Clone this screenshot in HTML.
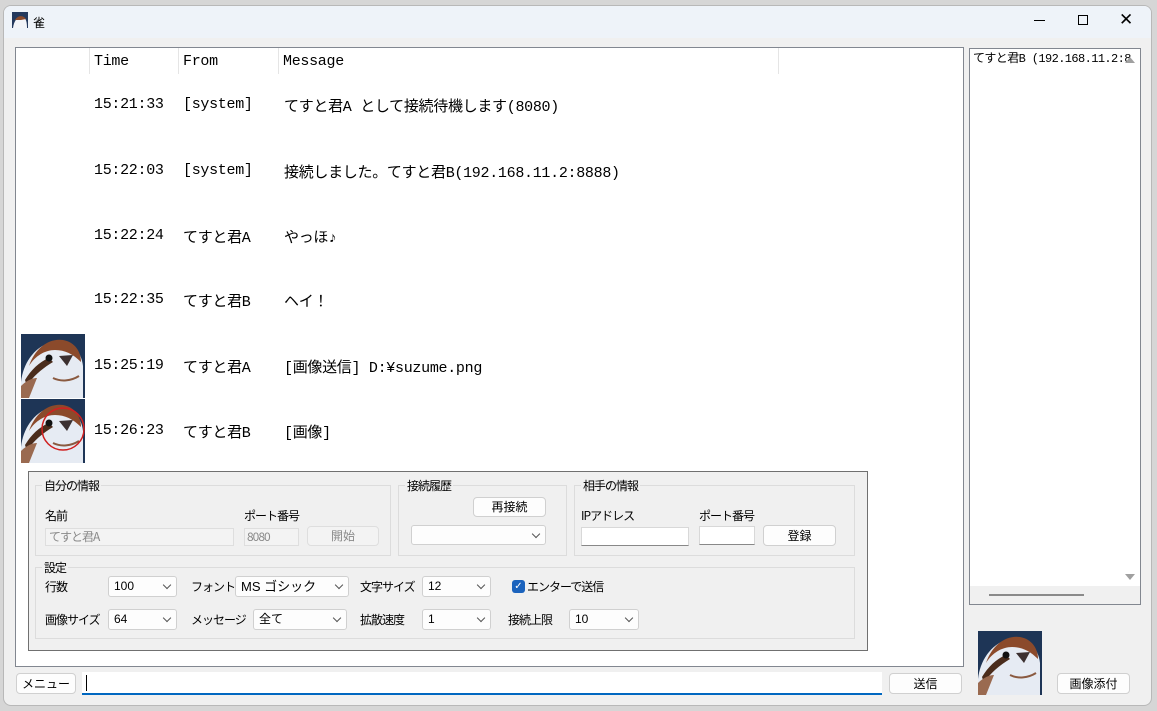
<!DOCTYPE html>
<html><head><meta charset="utf-8">
<style>
*{box-sizing:border-box;margin:0;padding:0}
body{width:1157px;height:711px;background:#d6d6d6;position:relative;overflow:hidden;font-family:"Liberation Mono","Noto Sans CJK JP",monospace;color:#000}
.win{position:absolute;left:3px;top:5px;width:1149px;height:701px;background:#f0f0f0;border:1px solid #b8b8b8;border-radius:8px;overflow:hidden}
.title{position:absolute;left:0;top:0;width:100%;height:32px;background:#eef3f9}
.a{position:absolute;white-space:nowrap}
.panel{position:absolute;background:#fff;border:1px solid #828790}
.m{font-size:15px;letter-spacing:-0.3px}
.s{font-size:12px;letter-spacing:-1px;font-family:"Noto Sans CJK JP","Liberation Sans",sans-serif}
.gb{position:absolute;border:1px solid #dcdcdc}
.gl{position:absolute;top:-9px;left:6px;background:#f0f0f0;padding:0 2px;font-size:12px;letter-spacing:-1px;font-family:"Noto Sans CJK JP",sans-serif}
.btn{position:absolute;background:#fdfdfd;border:1px solid #d0d0d0;border-radius:4px;font-size:12px;text-align:center;font-family:"Noto Sans CJK JP",sans-serif}
.cb{position:absolute;background:#fdfdfd;border:1px solid #d0d0d0;border-radius:3px;font-size:12px;padding-left:5px;height:21px;line-height:19px;font-family:"Liberation Sans","Noto Sans CJK JP",sans-serif}
.cb:after{content:"";position:absolute;right:6px;top:5px;width:5px;height:5px;border-right:1px solid #555;border-bottom:1px solid #555;transform:rotate(45deg)}
.tb{position:absolute;background:#fff;border:1px solid #d8d8d8;border-bottom:1px solid #888;height:18px}
.dis{background:#f3f3f3;color:#8a8a8a;border-color:#dedede}
</style></head><body>
<div class="win">
<div class="title"></div>
<svg class="a" style="left:8px;top:6px" width="16" height="16" viewBox="0 0 16 16"><rect width="16" height="16" fill="#23395d"/><path d="M1 16 C2 8 6 4 11 5 C14 6 15 10 15 16Z" fill="#f2f4f8"/><path d="M3 8 C6 3 11 3 14 7 L9 8Z" fill="#8a4a2a"/></svg>
<div class="a s" style="left:29px;top:8px;font-size:12px">雀</div>
<div class="a" style="left:1030px;top:14px;width:11px;height:1px;background:#000"></div>
<div class="a" style="left:1074px;top:9px;width:10px;height:10px;border:1px solid #000"></div>
<div class="a" style="left:1115px;top:4px;font-size:17px;font-family:'DejaVu Sans'">✕</div>

<div class="panel" style="left:11px;top:41px;width:949px;height:620px">
 <div class="a" style="left:73px;top:0;width:1px;height:26px;background:#e5e5e5"></div>
 <div class="a" style="left:162px;top:0;width:1px;height:26px;background:#e5e5e5"></div>
 <div class="a" style="left:262px;top:0;width:1px;height:26px;background:#e5e5e5"></div>
 <div class="a" style="left:762px;top:0;width:1px;height:26px;background:#e5e5e5"></div>
 <div class="a m" style="left:78px;top:5px">Time</div>
 <div class="a m" style="left:167px;top:5px">From</div>
 <div class="a m" style="left:267px;top:5px">Message</div>

 <div class="a m" style="left:78px;top:48px">15:21:33</div><div class="a m" style="left:167px;top:48px">[system]</div><div class="a m" style="left:268px;top:47px">てすと君A として接続待機します(8080)</div>
 <div class="a m" style="left:78px;top:114px">15:22:03</div><div class="a m" style="left:167px;top:114px">[system]</div><div class="a m" style="left:268px;top:113px">接続しました。てすと君B(192.168.11.2:8888)</div>
 <div class="a m" style="left:78px;top:179px">15:22:24</div><div class="a m" style="left:167px;top:178px">てすと君A</div><div class="a m" style="left:268px;top:178px">やっほ♪</div>
 <div class="a m" style="left:78px;top:243px">15:22:35</div><div class="a m" style="left:167px;top:242px">てすと君B</div><div class="a m" style="left:268px;top:242px">ヘイ！</div>
 <div class="a m" style="left:78px;top:309px">15:25:19</div><div class="a m" style="left:167px;top:308px">てすと君A</div><div class="a m" style="left:268px;top:308px">[画像送信] D:¥suzume.png</div>
 <div class="a m" style="left:78px;top:374px">15:26:23</div><div class="a m" style="left:167px;top:373px">てすと君B</div><div class="a m" style="left:268px;top:373px">[画像]</div>

 <svg class="a" style="left:5px;top:286px" width="64" height="64" viewBox="0 0 64 64"><rect width="64" height="64" fill="#1e3556"/><path d="M0 64 L0 48 C2 30 12 14 30 8 C46 4 60 14 62 32 L62 64Z" fill="#e6ebf3"/><path d="M8 32 C14 14 28 4 42 6 C54 8 60 18 60 28 C52 20 44 16 34 16 C24 16 14 22 8 32Z" fill="#8b4a2b"/><path d="M4 46 C10 36 18 28 28 24 L32 28 C22 34 12 42 6 52Z" fill="#4a2c1c"/><path d="M0 64 L0 52 C6 46 12 44 16 44 L8 64Z" fill="#9a6a50"/><circle cx="28" cy="24" r="3.5" fill="#111"/><path d="M38 22 L52 21 L46 32Z" fill="#3c3030"/><path d="M32 44 C40 48 50 47 58 42" stroke="#8a5a40" stroke-width="2" fill="none"/></svg>
 <svg class="a" style="left:5px;top:351px" width="64" height="64" viewBox="0 0 64 64"><rect width="64" height="64" fill="#1e3556"/><path d="M0 64 L0 48 C2 30 12 14 30 8 C46 4 60 14 62 32 L62 64Z" fill="#e6ebf3"/><path d="M8 32 C14 14 28 4 42 6 C54 8 60 18 60 28 C52 20 44 16 34 16 C24 16 14 22 8 32Z" fill="#8b4a2b"/><path d="M4 46 C10 36 18 28 28 24 L32 28 C22 34 12 42 6 52Z" fill="#4a2c1c"/><path d="M0 64 L0 52 C6 46 12 44 16 44 L8 64Z" fill="#9a6a50"/><circle cx="28" cy="24" r="3.5" fill="#111"/><path d="M38 22 L52 21 L46 32Z" fill="#3c3030"/><path d="M32 44 C40 48 50 47 58 42" stroke="#8a5a40" stroke-width="2" fill="none"/><circle cx="42" cy="30" r="21" stroke="#d02020" stroke-width="1.5" fill="none"/></svg>

 <div class="a" style="left:12px;top:423px;width:840px;height:180px;background:#f0f0f0;border:1px solid #707070">
  <div class="gb" style="left:6px;top:13px;width:356px;height:71px"><div class="gl">自分の情報</div></div>
  <div class="a s" style="left:16px;top:35px">名前</div>
  <div class="a s" style="left:215px;top:35px">ポート番号</div>
  <div class="tb dis s" style="left:16px;top:56px;width:189px;padding-left:3px;line-height:16px">てすと君A</div>
  <div class="tb dis s" style="left:215px;top:56px;width:55px;padding-left:2px;line-height:16px">8080</div>
  <div class="btn dis" style="left:278px;top:54px;width:72px;height:20px;line-height:18px">開始</div>

  <div class="gb" style="left:369px;top:13px;width:169px;height:71px"><div class="gl">接続履歴</div></div>
  <div class="btn" style="left:444px;top:25px;width:73px;height:20px;line-height:18px">再接続</div>
  <div class="cb" style="left:382px;top:53px;width:135px;height:20px"></div>

  <div class="gb" style="left:545px;top:13px;width:281px;height:71px"><div class="gl">相手の情報</div></div>
  <div class="a s" style="left:552px;top:35px">IPアドレス</div>
  <div class="a s" style="left:670px;top:35px">ポート番号</div>
  <div class="tb" style="left:552px;top:55px;width:108px;height:19px"></div>
  <div class="tb" style="left:670px;top:54px;width:56px;height:19px"></div>
  <div class="btn" style="left:734px;top:53px;width:73px;height:21px;line-height:19px">登録</div>

  <div class="gb" style="left:6px;top:95px;width:820px;height:72px"><div class="gl">設定</div></div>
  <div class="a s" style="left:16px;top:106px">行数</div>
  <div class="cb" style="left:79px;top:104px;width:69px">100</div>
  <div class="a s" style="left:162px;top:106px">フォント</div>
  <div class="cb" style="left:206px;top:104px;width:114px;font-size:13px">MS ゴシック</div>
  <div class="a s" style="left:331px;top:106px">文字サイズ</div>
  <div class="cb" style="left:393px;top:104px;width:69px">12</div>
  <div class="a" style="left:483px;top:108px;width:13px;height:13px;background:#1b63bd;border-radius:3px;color:#fff;font-size:10px;line-height:13px;text-align:center;font-family:'DejaVu Sans'">✓</div>
  <div class="a s" style="left:498px;top:106px">エンターで送信</div>
  <div class="a s" style="left:16px;top:139px">画像サイズ</div>
  <div class="cb" style="left:79px;top:137px;width:69px">64</div>
  <div class="a s" style="left:162px;top:139px">メッセージ</div>
  <div class="cb" style="left:224px;top:137px;width:94px">全て</div>
  <div class="a s" style="left:331px;top:139px">拡散速度</div>
  <div class="cb" style="left:393px;top:137px;width:69px">1</div>
  <div class="a s" style="left:479px;top:139px">接続上限</div>
  <div class="cb" style="left:540px;top:137px;width:70px">10</div>
 </div>
</div>

<div class="panel" style="left:965px;top:42px;width:172px;height:557px">
 <div class="a" style="left:3px;top:0px;font-size:12px;letter-spacing:-0.6px">てすと君B (192.168.11.2:8</div>
 <div class="a" style="left:155px;top:8px;width:0;height:0;border-left:5px solid transparent;border-right:5px solid transparent;border-bottom:6px solid #a0a0a0"></div>
 <div class="a" style="left:155px;top:525px;width:0;height:0;border-left:5px solid transparent;border-right:5px solid transparent;border-top:6px solid #a0a0a0"></div>
 <div class="a" style="left:0;top:537px;width:170px;height:18px;background:#f0f0f0"></div>
 <div class="a" style="left:19px;top:545px;width:95px;height:2px;background:#8a8a8a"></div>
</div>

<svg class="a" style="left:974px;top:625px" width="64" height="64" viewBox="0 0 64 64"><rect width="64" height="64" fill="#1e3556"/><path d="M0 64 L0 48 C2 30 12 14 30 8 C46 4 60 14 62 32 L62 64Z" fill="#e6ebf3"/><path d="M8 32 C14 14 28 4 42 6 C54 8 60 18 60 28 C52 20 44 16 34 16 C24 16 14 22 8 32Z" fill="#8b4a2b"/><path d="M4 46 C10 36 18 28 28 24 L32 28 C22 34 12 42 6 52Z" fill="#4a2c1c"/><path d="M0 64 L0 52 C6 46 12 44 16 44 L8 64Z" fill="#9a6a50"/><circle cx="28" cy="24" r="3.5" fill="#111"/><path d="M38 22 L52 21 L46 32Z" fill="#3c3030"/><path d="M32 44 C40 48 50 47 58 42" stroke="#8a5a40" stroke-width="2" fill="none"/></svg>

<div class="btn" style="left:12px;top:667px;width:60px;height:21px;line-height:19px">メニュー</div>
<div class="a" style="left:78px;top:666px;width:800px;height:23px;background:#fff;border-bottom:2px solid #0067c0"></div>
<div class="a" style="left:82px;top:669px;width:1px;height:16px;background:#000"></div>
<div class="btn" style="left:885px;top:667px;width:73px;height:21px;line-height:19px">送信</div>
<div class="btn" style="left:1053px;top:667px;width:73px;height:21px;line-height:19px">画像添付</div>
</div>
</body></html>
